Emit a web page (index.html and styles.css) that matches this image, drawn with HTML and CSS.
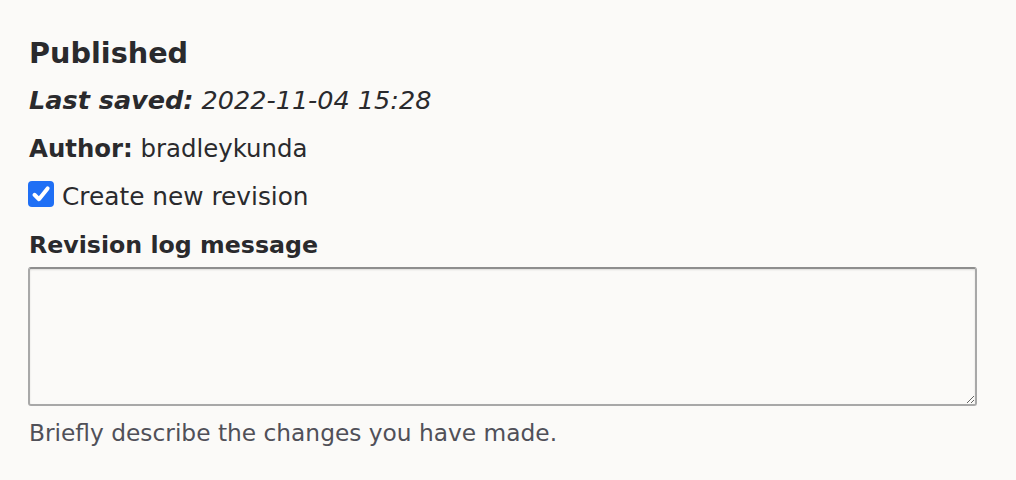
FILE: index.html
```html
<!DOCTYPE html>
<html lang="en">
<head>
<meta charset="utf-8">
<title>Revision</title>
<link rel="stylesheet" href="styles.css">
</head>
<body>
<div class="meta">
  <h2 class="status">Published</h2>
  <div class="saved"><em><strong>Last saved:</strong> 2022-11-04 15:28</em></div>
  <div class="author"><strong>Author:</strong> bradleykunda</div>
  <label class="check">
    <span class="box"><svg viewBox="0 0 26 26" width="26" height="26"><path d="M6.5 13.8 L11 18.2 L19.6 7.4" fill="none" stroke="#fff" stroke-width="4" stroke-linecap="round" stroke-linejoin="round"/></svg></span>
    <span class="check-label">Create new revision</span>
  </label>
  <div class="field">
    <label class="field-label" for="log">Revision log message</label>
    <textarea id="log" class="log"></textarea>
    <div class="desc">Briefly describe the changes you have made.</div>
  </div>
</div>
</body>
</html>
```
FILE: styles.css
```css
html, body {
  margin: 0;
  background: #fbfaf8;
}
body {
  font-family: "DejaVu Sans", "Liberation Sans", sans-serif;
  color: #2a2a2d;
}
.meta {
  padding: 33px 0 0 28px;
  width: 949px;
}
.status {
  margin: 0;
  font-size: 28.7px;
  font-weight: bold;
  line-height: 40px;
  padding-left: 1px;
}
.saved {
  margin-top: 12px;
  font-size: 25.5px;
  line-height: 30px;
  padding-left: 1px;
}
.saved strong { font-weight: bold; }
.author {
  margin-top: 19px;
  font-size: 24.4px;
  line-height: 30px;
  padding-left: 1px;
}
.check {
  display: flex;
  align-items: flex-start;
  gap: 8px;
  margin-top: 17px;
}
.box {
  flex: none;
  width: 26px;
  height: 26px;
  border-radius: 4px;
  background: #1f6ff5;
  display: flex;
}
.check-label {
  margin-top: 1px;
  font-size: 24.8px;
  line-height: 30px;
}
.field { margin-top: 18px; }
.field-label {
  display: block;
  font-size: 23.7px;
  font-weight: bold;
  line-height: 30px;
  padding-left: 1px;
}
.log {
  display: block;
  box-sizing: border-box;
  width: 949px;
  height: 139px;
  margin: 7px 0 0;
  border: 2px solid #a8a8a8;
  border-top-color: #8e8e8e;
  border-radius: 3px;
  background: #fbfaf8;
  box-shadow: inset 0 1px 2px rgba(0,0,0,0.12);
  resize: vertical;
  font: inherit;
}
.desc {
  margin-top: 12px;
  font-size: 23.3px;
  line-height: 30px;
  color: #505058;
  padding-left: 1px;
}
```
